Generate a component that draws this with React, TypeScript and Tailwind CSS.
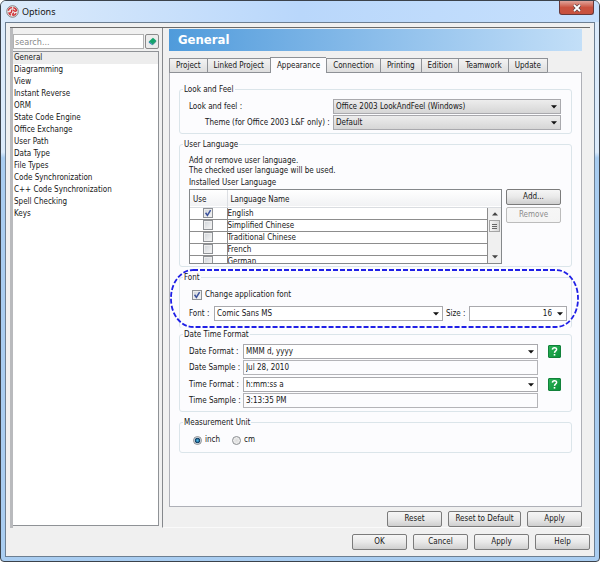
import React, { useState } from 'react';

const categories = [
  'General',
  'Diagramming',
  'View',
  'Instant Reverse',
  'ORM',
  'State Code Engine',
  'Office Exchange',
  'User Path',
  'Data Type',
  'File Types',
  'Code Synchronization',
  'C++ Code Synchronization',
  'Spell Checking',
  'Keys',
];

const tabs = ['Project', 'Linked Project', 'Appearance', 'Connection', 'Printing', 'Edition', 'Teamwork', 'Update'];

const languages = ['English', 'Simplified Chinese', 'Traditional Chinese', 'French', 'German'];

const PushButton: React.FC<{ label: string; className?: string; disabled?: boolean }> = ({ label, className = 'w-[55px]', disabled }) => (
  <button
    disabled={disabled}
    className={`h-4 shrink-0 rounded-[2px] border border-[#7b7b7b] bg-linear-to-b from-[#f6f6f6] via-[#e9e9e9] to-[#cfcfcf] text-center leading-[14px] disabled:border-[#bcbcbc] disabled:from-[#f6f6f6] disabled:via-[#f5f5f5] disabled:to-[#f4f4f4] disabled:text-[#8c8c8c] ${className}`}
  >
    {label}
  </button>
);

interface GroupProps {
  title: string;
  className?: string;
  bodyClassName?: string;
  children: React.ReactNode;
}

const Group: React.FC<GroupProps> = ({ title, className = '', bodyClassName = 'pr-[10px] pl-[9px]', children }) => (
  <fieldset className={`relative min-w-0 rounded-[3px] border border-[#dbe5ea] ${className}`}>
    <legend className="ml-[3px] h-3 px-px leading-[14px]">{title}</legend>
    <div className={bodyClassName}>{children}</div>
  </fieldset>
);

interface ComboProps {
  id: string;
  value: string;
  className?: string;
  flat?: boolean;
  alignRight?: boolean;
}

const Combo: React.FC<ComboProps> = ({ id, value, className = 'flex-1', flat, alignRight }) => (
  <div className={`relative h-[15px] min-w-0 ${className}`}>
    <select
      id={id}
      className={`block h-full w-full appearance-none border border-[#a9a9ad] pl-[2px] leading-[13px] ${
        flat ? 'bg-white' : 'bg-linear-to-b from-[#ededed] to-[#d6d6d6]'
      } ${alignRight ? 'pr-[14px] text-right' : 'pr-3'}`}
    >
      <option>{value}</option>
    </select>
    <svg viewBox="0 0 6 4" className="pointer-events-none absolute top-[6px] right-1 h-1 w-[6px]">
      <path d="M0 0.3H6L3 3.6Z" fill="#111" />
    </svg>
  </div>
);

const CheckBox: React.FC<{ id?: string; label?: string; checked?: boolean }> = ({ id, label, checked }) => (
  <span className="grid h-[10px] w-[10px] shrink-0">
    <input
      id={id}
      type="checkbox"
      aria-label={label}
      defaultChecked={checked}
      className="peer col-start-1 row-start-1 h-[10px] w-[10px] appearance-none border border-[#8f9296] bg-linear-to-br from-[#cfd3d8] to-[#f8f8f8] outline outline-1 -outline-offset-2 outline-[#eeeeee]"
    />
    <svg viewBox="0 0 10 10" className="pointer-events-none invisible col-start-1 row-start-1 h-[10px] w-[10px] peer-checked:visible">
      <path d="M2.6 4.8L4.4 7.4L7.6 2.2" fill="none" stroke="#3c539c" strokeWidth="1.5" />
    </svg>
  </span>
);

const Radio: React.FC<{ id: string; label: string; checked?: boolean }> = ({ id, label, checked }) => (
  <span className="flex items-center gap-[3px]">
    <input
      id={id}
      type="radio"
      name="unit"
      defaultChecked={checked}
      className="h-[9px] w-[9px] appearance-none rounded-full border border-[#8b8e91] bg-radial from-[#dcdcdc] to-[#f7f7f7] checked:bg-radial checked:from-[#49b5e6] checked:from-10% checked:via-[#123f63] checked:via-45% checked:to-[#e9eef2] checked:to-65%"
    />
    <label htmlFor={id}>{label}</label>
  </span>
);

const HelpButton: React.FC<{ label: string }> = ({ label }) => (
  <button
    aria-label={label}
    className="ml-[10px] h-[13px] w-[13px] rounded-[1px] border border-[#12813a] bg-linear-to-br from-[#29b155] to-[#07923a]"
  >
    <svg viewBox="0 0 11 11" className="h-[11px] w-[11px]">
      <path d="M3.4 3.6C3.5 1.3 7.6 1.2 7.6 3.5C7.6 5 5.6 4.9 5.5 6.9" fill="none" stroke="#fff" strokeWidth="1.5" />
      <rect x="4.7" y="8" width="1.6" height="1.6" fill="#fff" />
    </svg>
  </button>
);

const FormatRow: React.FC<{ id: string; label: string; value: string; help?: boolean }> = ({ id, label, value, help }) => (
  <div className="flex h-[15px] items-center">
    <label htmlFor={id} className="w-[54px] shrink-0 whitespace-nowrap">
      {label}
    </label>
    {help ? (
      <Combo id={id} value={value} flat />
    ) : (
      <input
        id={id}
        readOnly
        value={value}
        className="h-[15px] min-w-0 flex-1 border border-[#b4b4b8] bg-[#fcfcfe] px-[2px] leading-[13px]"
      />
    )}
    <div className="flex w-[23px] shrink-0">{help && <HelpButton label={`${label.replace(' :', '')} help`} />}</div>
  </div>
);

const Sidebar: React.FC = () => {
  const [selected, setSelected] = useState('General');

  return (
    <aside className="flex w-[149px] shrink-0 flex-col border-l-3 border-l-[#b9babd] bg-[#f0f0f0] pt-[6px] pb-[2px]">
      <div className="flex gap-px">
        <input
          aria-label="Search"
          placeholder="search..."
          className="h-[15px] min-w-0 flex-1 border border-[#b2b2b2] bg-white px-px text-[9px] placeholder:text-[#8a8a8a]"
        />
        <button aria-label="Clear search" className="flex h-[15px] w-[14px] items-center justify-center rounded-[2px] border border-[#8a8a8a] bg-[#ececec]">
          <svg viewBox="0 0 12 12" className="h-[11px] w-[11px]">
            <path d="M2 6L6.5 2L10 5L6 9Z" fill="#13a56c" />
            <path d="M2 6L6 9V10.2L2 7.3Z" fill="#2878b8" />
            <path d="M6 9L10 5V6.2L6 10.2Z" fill="#0c7f68" />
          </svg>
        </button>
      </div>
      <ul className="mt-[2px] flex-1 border-t border-r border-b border-[#8f9296] bg-white">
        {categories.map((name) => (
          <li key={name}>
            <button
              onClick={() => setSelected(name)}
              className={`block h-3 w-full pl-px text-left leading-3 ${name === selected ? 'bg-[#ededed]' : ''}`}
            >
              {name}
            </button>
          </li>
        ))}
      </ul>
    </aside>
  );
};

const LanguageTable: React.FC = () => (
  <div className="relative h-[75px] min-w-0 flex-1 overflow-hidden border border-[#85888b] bg-white">
    <table className="w-full table-fixed border-collapse">
      <thead>
        <tr className="h-[17px] border-b border-[#dadde1] bg-linear-to-b from-white to-[#f1f2f4] text-left">
          <th className="w-[37px] border-r border-[#dcdfe3] pt-1 pb-0 pl-[3px] font-normal">Use</th>
          <th className="pt-1 pb-0 pl-[3px] font-normal">Language Name</th>
        </tr>
      </thead>
      <tbody>
        {languages.map((name, i) => (
          <tr key={name} className="h-3 border-b border-[#8d8d8d]">
            <td className="border-r border-[#8d8d8d] p-0">
              <div className="flex h-[11px] items-center justify-center">
                <CheckBox label={name} checked={i === 0} />
              </div>
            </td>
            <td className="p-0 leading-[11px]">{name}</td>
          </tr>
        ))}
      </tbody>
    </table>
    {/* scroll bar sits over the right edge, below the header */}
    <div className="absolute top-[18px] right-0 bottom-0 flex w-[14px] flex-col items-center border-l border-[#8d8d8d] bg-[#f0f0f0] py-1">
      <svg viewBox="0 0 6 4" className="h-1 w-[6px]">
        <path d="M0 3.6H6L3 0.3Z" fill="#444" />
      </svg>
      <div className="mt-1 flex h-3 w-[11px] flex-col items-center justify-center gap-px border border-[#a5a5a5] bg-linear-to-r from-[#f5f5f5] to-[#d8d8d8]">
        <span className="h-px w-[5px] bg-[#666]" />
        <span className="h-px w-[5px] bg-[#666]" />
        <span className="h-px w-[5px] bg-[#666]" />
      </div>
      <svg viewBox="0 0 6 4" className="mt-auto h-1 w-[6px]">
        <path d="M0 0.3H6L3 3.6Z" fill="#444" />
      </svg>
    </div>
  </div>
);

const AppearancePanel: React.FC = () => (
  <div className="flex-1 border border-t-0 border-[#aeb0b7] bg-[#fcfcfe] px-[9px] pt-[10px]">
    <Group title="Look and Feel" className="h-[51px]">
      <div className="flex flex-col gap-px pt-1">
        <div className="flex items-center">
          <label htmlFor="laf" className="w-36 shrink-0">Look and feel :</label>
          <Combo id="laf" value="Office 2003 LookAndFeel (Windows)" />
        </div>
        <div className="flex items-center">
          <label htmlFor="theme" className="w-36 shrink-0 pl-4 whitespace-nowrap">Theme (for Office 2003 L&amp;F only) :</label>
          <Combo id="theme" value="Default" />
        </div>
      </div>
    </Group>

    <Group title="User Language" className="mt-1 h-[129px]">
      <p className="pt-[6px] leading-[10px]">
        Add or remove user language.
        <br />
        The checked user language will be used.
      </p>
      <p className="mt-px leading-3">Installed User Language</p>
      <div className="flex gap-1">
        <LanguageTable />
        <div className="flex flex-col gap-[2px]">
          <PushButton label="Add..." />
          <PushButton label="Remove" disabled />
        </div>
      </div>
    </Group>

    <Group title="Font" className="mt-1 h-[57px] border-b-0" bodyClassName="pr-1 pl-[9px]">
      <div className="flex items-center gap-[3px] pt-[7px] pl-[3px]">
        <CheckBox id="change-font" checked />
        <label htmlFor="change-font" className="leading-[10px]">Change application font</label>
      </div>
      <div className="flex items-center pt-[6px]">
        <label htmlFor="font" className="w-[25px] shrink-0">Font :</label>
        <Combo id="font" value="Comic Sans MS" flat />
        <label htmlFor="size" className="w-[26px] shrink-0 pl-[3px]">Size :</label>
        <Combo id="size" value="16" flat alignRight className="w-[98px]" />
      </div>
      {/* dashed callout around the whole group */}
      <svg className="pointer-events-none absolute -top-[14px] -left-[10px] h-[60px] w-[calc(100%+16px)] overflow-visible">
        <rect x="1" y="1" width="100%" height="57" rx="22" ry="28" fill="none" stroke="#1f1fe6" strokeWidth="1.8" strokeDasharray="5 2" />
      </svg>
    </Group>

    <Group title="Date Time Format" className="h-[84px]">
      <div className="flex flex-col gap-[2px] pt-1">
        <div className="flex flex-col gap-px">
          <FormatRow id="date-format" label="Date Format :" value="MMM d, yyyy" help />
          <FormatRow id="date-sample" label="Date Sample :" value="Jul 28, 2010" />
        </div>
        <div className="flex flex-col gap-px">
          <FormatRow id="time-format" label="Time Format :" value="h:mm:ss a" help />
          <FormatRow id="time-sample" label="Time Sample :" value="3:13:35 PM" />
        </div>
      </div>
    </Group>

    <Group title="Measurement Unit" className="mt-1 h-[37px]" bodyClassName="px-[13px]">
      <div className="flex gap-3 pt-[6px]">
        <Radio id="inch" label="inch" checked />
        <Radio id="cm" label="cm" />
      </div>
    </Group>
  </div>
);

const App: React.FC = () => {
  const [tab, setTab] = useState('Appearance');

  return (
    <div className="flex min-h-screen flex-col rounded-t-[6px] rounded-b-[4px] border border-[#3b424b] bg-linear-to-b from-[#dcebfb] from-27% to-[#a9cdf1] to-28% px-1 pb-1 font-['DejaVu_Sans_Condensed','DejaVu_Sans',sans-serif] text-[8px] leading-3 text-[#161616]">
      <header className="-mx-1 flex h-[21px] shrink-0 items-start rounded-t-[5px] bg-linear-to-r from-[#dcebfb] via-[#b9d7fb] to-[#c6e0fd] px-[5px]">
        <svg viewBox="0 0 14 14" className="mt-1 h-[13px] w-[13px]">
          <circle cx="7" cy="7" r="6.2" fill="#eee8e8" stroke="#777" strokeWidth="1" />
          <path
            d="M2.6 6.2C2.8 4 4.4 2.8 6.6 2.8M4 8.6C5.6 8.4 6.6 7.2 6 5M7.8 2.9C10 3.2 11.3 4.8 11.3 6.8M7.6 5C8 6.4 9.2 7 11 6.6M11 8.8C10.2 10.6 8.6 11.3 7 11.2M8.6 8.4C7.6 8.8 7 9.8 7.2 11M5.4 11C4 10.4 3.2 9.4 2.9 8"
            fill="none"
            stroke="#cf3036"
            strokeWidth="1.5"
          />
        </svg>
        <h1 className="mt-1 ml-[3px] font-['Noto_Sans','Open_Sans',sans-serif] text-[9px] leading-[13px]">Options</h1>
        <button
          aria-label="Close"
          className="ml-auto flex h-[14px] w-[35px] items-center justify-center rounded-b-[3px] border border-t-0 border-[#68393a] bg-linear-to-b from-[#dfa39a] via-[#c9523f] to-[#c7513e]"
        >
          <svg viewBox="0 0 10 8" className="h-2 w-[10px]">
            <path d="M2 1L8 7M8 1L2 7" stroke="#5b4347" strokeWidth="3.2" />
            <path d="M2 1L8 7M8 1L2 7" stroke="#fff" strokeWidth="1.8" />
          </svg>
        </button>
      </header>

      <main className="flex flex-1 flex-col border border-[#6d7f92] bg-[#f0f0f0] px-1 pt-1 pb-[6px]">
        <div className="flex flex-1 border-t border-[#6b6b6b]">
          <Sidebar />
          <section className="ml-[3px] flex min-w-0 flex-1 flex-col border-b border-l border-b-[#fafafa] border-l-[#85888c] pt-px pr-2 pl-[6px]">
            <h2 className="h-[22px] bg-linear-to-r from-[#4f9bdb] to-[#c3dff8] pl-[9px] text-[13px] leading-[22px] font-bold text-white">
              General
            </h2>
            <div role="tablist" className="mt-[6px] flex h-4 items-end">
              {tabs.map((name) => (
                <button
                  key={name}
                  role="tab"
                  aria-selected={name === tab}
                  onClick={() => setTab(name)}
                  className={`border-t border-l border-[#8e9196] px-[6px] whitespace-nowrap ${
                    name === tab
                      ? 'h-4 bg-[#fcfcfe] leading-[14px]'
                      : 'h-[15px] border-b bg-linear-to-b from-[#f3f3f3] to-[#dedede] leading-[13px]'
                  }`}
                >
                  {name}
                </button>
              ))}
              <div className="h-[15px] flex-1 border-b border-l border-b-[#aeb0b7] border-l-[#8e9196]" />
            </div>
            <AppearancePanel />
            <div className="flex justify-end gap-[6px] pt-1">
              <PushButton label="Reset" />
              <PushButton label="Reset to Default" className="w-[73px]" />
              <PushButton label="Apply" />
            </div>
          </section>
        </div>
        <footer className="flex justify-end gap-[6px] pt-[6px]">
          <PushButton label="OK" />
          <PushButton label="Cancel" />
          <PushButton label="Apply" />
          <PushButton label="Help" />
        </footer>
      </main>
    </div>
  );
};

export default App;
